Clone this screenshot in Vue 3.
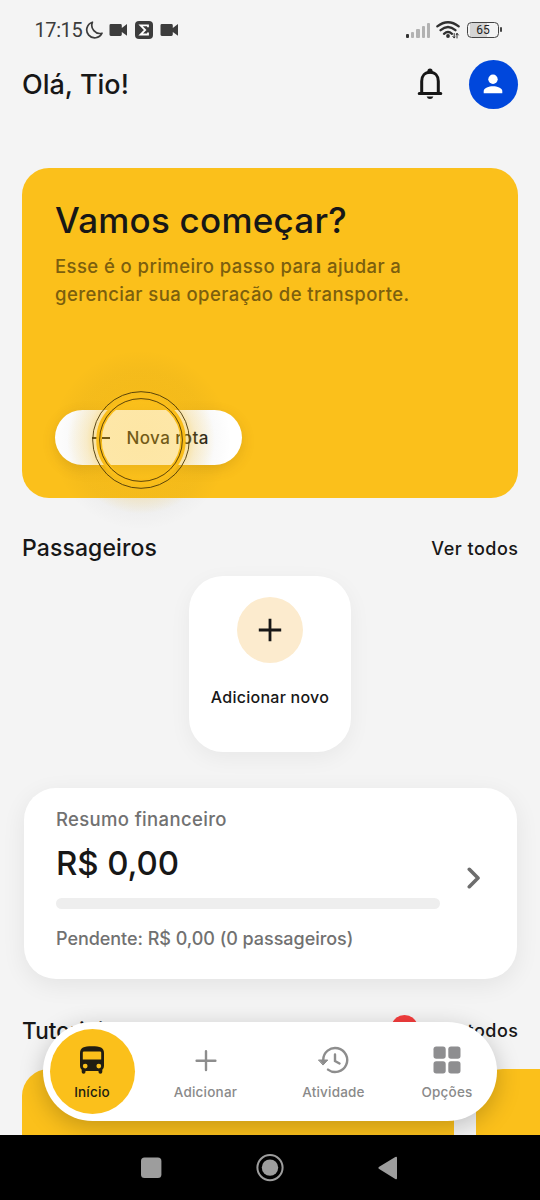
<script setup>
const signal = [4, 6, 9, 12, 15]
const tabs = [
  { id: 'home', label: 'Início', active: true },
  { id: 'add', label: 'Adicionar' },
  { id: 'history', label: 'Atividade' },
  { id: 'options', label: 'Opções' },
]
</script>

<template>
  <div class="phone">
    <div class="status">
      <span class="clock">17:15</span>
      <svg class="moon" width="18" height="18" viewBox="0 0 18 18"><path d="M7.4 1.2A8 8 0 1 0 17 12.2A8.2 8.2 0 0 1 7.4 1.2Z" /></svg>
      <svg class="cam" width="19" height="14" viewBox="0 0 19 14"><path d="M1.8 1H11.4Q12.8 1 12.8 2.4V5L18 1V12.8L12.8 9V11.6Q12.8 13 11.4 13H1.8Q.5 13 .5 11.6V2.4Q.5 1 1.8 1Z" /></svg>
      <svg class="sigma" width="18" height="18" viewBox="0 0 18 18"><rect width="18" height="18" rx="4" /><path d="M13 6.2V4.4H5.6L10.2 9L5.6 13.5H13V11.6" /></svg>
      <svg class="cam cam-last" width="19" height="14" viewBox="0 0 19 14"><path d="M1.8 1H11.4Q12.8 1 12.8 2.4V5L18 1V12.8L12.8 9V11.6Q12.8 13 11.4 13H1.8Q.5 13 .5 11.6V2.4Q.5 1 1.8 1Z" /></svg>
      <div class="signal">
        <i v-for="h in signal" :key="h" :style="{ height: h + 'px' }"></i>
      </div>
      <svg class="wifi" width="24" height="18" viewBox="0 0 24 18">
        <path d="M1.3 5.4Q12 -3 22.7 5.4M4.6 9.2Q12 2.8 19.4 9.2M8 12.8Q12 9.2 16 12.8" />
        <circle cx="12" cy="15" r="1.9" />
        <path class="arrows" d="M18.2 12.5V16.8M16.8 15.3L18.2 17L19 16M21 17V12.5M20.2 13.8L21 12.3L22.4 14" />
      </svg>
      <div class="battery"><span>65</span></div>
    </div>

    <header class="header">
      <h1>Olá, Tio!</h1>
      <svg class="bell" width="26" height="32" viewBox="0 0 26 32">
        <path d="M4.7 25V13.2C4.7 7.8 8 4.3 13 4.3S21.3 7.8 21.3 13.2V25M2.2 25.5H23.8" />
        <circle cx="13" cy="3" r="2.6" /><path class="solid" d="M9.6 28.4H16.4Q15.5 31 13 31T9.6 28.4Z" />
      </svg>
      <div class="avatar">
        <svg width="20" height="20" viewBox="0 0 20 20"><circle cx="10" cy="5.3" r="4.7" /><path d="M.7 19.2V17C.7 14 6 12.2 10 12.2S19.3 14 19.3 17V19.2Z" /></svg>
      </div>
    </header>

    <section class="hero">
      <h2>Vamos começar?</h2>
      <p>Esse é o primeiro passo para ajudar a<br />gerenciar sua operação de transporte.</p>
      <div class="route">
        <svg width="18" height="18" viewBox="0 0 18 18"><path d="M0 9H18M9 0V18" /></svg>
        <span>Nova rota</span>
        <div class="pulse">
          <svg width="180" height="180" viewBox="0 0 180 180">
            <defs>
              <radialGradient id="halo">
                <stop offset="0" stop-color="#fbc01b" stop-opacity=".4" />
                <stop offset=".52" stop-color="#fbc01b" stop-opacity=".38" />
                <stop offset=".62" stop-color="#fbc01b" stop-opacity=".2" />
                <stop offset=".84" stop-color="#fbc01b" stop-opacity="0" />
              </radialGradient>
              <radialGradient id="shade">
                <stop offset="0" stop-color="#000" stop-opacity="0" />
                <stop offset=".42" stop-color="#000" stop-opacity="0" />
                <stop offset=".53" stop-color="#442a00" stop-opacity=".045" />
                <stop offset=".75" stop-color="#222" stop-opacity=".03" />
                <stop offset="1" stop-color="#222" stop-opacity="0" />
              </radialGradient>
            </defs>
            <circle cx="90" cy="90" r="90" fill="url(#shade)" />
            <circle cx="90" cy="90" r="88" fill="url(#halo)" />
            <circle cx="90" cy="90" r="42" fill="none" stroke="#fabd19" stroke-width="5.5" />
            <circle cx="90" cy="90" r="48.3" fill="none" stroke="#493707" stroke-width=".9" />
            <circle cx="90" cy="90" r="41.4" fill="none" stroke="#493707" stroke-width=".9" />
          </svg>
        </div>
      </div>
    </section>

    <div class="row-title">
      <h3>Passageiros</h3><span class="all">Ver todos</span>
    </div>

    <div class="add-card">
      <div class="add-dot"><svg width="24" height="24" viewBox="0 0 24 24"><path d="M.8 12H23.2M12 .8V23.2" /></svg></div>
      <span>Adicionar novo</span>
    </div>

    <section class="finance">
      <div class="fin-main">
        <span class="fin-title">Resumo financeiro</span>
        <strong>R$ 0,00</strong>
        <div class="track"></div>
        <span class="pending">Pendente: R$ 0,00 (0 passageiros)</span>
      </div>
      <svg class="chevron" width="14" height="22" viewBox="0 0 14 22"><path d="M2.3 2.3L11 11L2.3 19.7" /></svg>
    </section>

    <div class="row-title tutorials">
      <h3>Tutoriais</h3><i class="dot"></i><span class="all">Ver todos</span>
    </div>
    <div class="videos"><div class="video"></div><div class="video"></div></div>

    <nav class="tabs">
      <div v-for="t in tabs" :key="t.id" class="tab" :class="[t.id, { active: t.active }]">
        <svg v-if="t.id === 'home'" width="26" height="28" viewBox="0 0 26 28"><path fill-rule="evenodd" d="M1 7C1 1.7 5 .3 13 .3S25 1.7 25 7V20Q25 22.4 23.3 23.8V26Q23.3 27.7 21.4 27.7T19.5 26V25H6.5V26Q6.5 27.7 4.6 27.7T2.7 26V23.8Q1 22.4 1 20ZM3.8 6.6V13.5H22.2V6.6Q22.2 5.6 21 5.6H5Q3.8 5.6 3.8 6.6ZM6.2 17.7A2.4 2.4 0 1 0 6.2 22.5A2.4 2.4 0 1 0 6.2 17.7ZM19.8 17.7A2.4 2.4 0 1 0 19.8 22.5A2.4 2.4 0 1 0 19.8 17.7Z" /></svg>
        <svg v-else-if="t.id === 'add'" width="22" height="28" viewBox="0 0 22 28"><path d="M1.6 14.7H20.4M11 5.3V24.1" /></svg>
        <svg v-else-if="t.id === 'history'" width="32" height="28" viewBox="0 0 32 28"><path d="M5.2 16V14A12 12 0 1 1 10 23.6M17 8.5V15L21.5 17.5" /><path class="tip" d="M.8 14H9.8L5.3 18.8Z" /></svg>
        <svg v-else width="28" height="28" viewBox="0 0 28 28"><rect x=".5" y=".5" width="12.2" height="12.2" rx="2.7" /><rect x="15.3" y=".5" width="12.2" height="12.2" rx="2.7" /><rect x=".5" y="15.3" width="12.2" height="12.2" rx="2.7" /><rect x="15.3" y="15.3" width="12.2" height="12.2" rx="2.7" /></svg>
        <span>{{ t.label }}</span>
      </div>
    </nav>

    <footer class="system">
      <svg width="22" height="22" viewBox="0 0 22 22"><rect x="1" y=".6" width="20.4" height="20.4" rx="3.5" /></svg>
      <svg width="28" height="28" viewBox="0 0 28 28"><circle cx="14" cy="13.6" r="12.6" fill="none" stroke="#9d9d9d" stroke-width="2" /><circle cx="14" cy="13.6" r="8.2" /></svg>
      <svg width="20" height="24" viewBox="0 0 20 24"><path d="M1.2 10.8L17.3 1Q19 .2 19 2V22Q19 24 17.3 22.9L1.2 13.1Q-.4 12 1.2 10.8Z" /></svg>
    </footer>
  </div>
</template>

<style>
body { margin: 0; background: #f4f4f4; }
</style>

<style scoped>
* { box-sizing: border-box; }
h1, h2, h3, p { margin: 0; font-weight: 500; }
svg { display: block; flex: none; }
.phone { position: relative; width: 540px; height: 1200px; overflow: hidden; background: #f4f4f4; color: #171717; font-family: "Inter", "Liberation Sans", sans-serif; font-weight: 500; white-space: nowrap; }
.status { height: 59px; display: flex; align-items: center; padding: 1px 41px 0 34.5px; color: #3c3c3c; }
.clock { width: 50px; font: 400 20px/24px Roboto, sans-serif; letter-spacing: -.4px; }
.moon path { fill: none; stroke: #3c3c3c; stroke-width: 1.7; stroke-linejoin: round; }
.cam { margin-left: 6.5px; fill: #3c3c3c; }
.sigma { margin-left: 6.5px; }
.sigma rect { fill: #3c3c3c; }
.sigma path { fill: none; stroke: #fff; stroke-width: 1.8; }
.cam-last { margin-left: 7px; }
.signal { margin-left: auto; display: flex; gap: 2px; align-items: flex-end; height: 15px; }
.signal i { width: 3.2px; border-radius: 1px; background: #b2b2b2; }
.signal i:first-child { background: #333; }
.wifi { margin-left: 6px; fill: #303030; }
.wifi path { fill: none; stroke: #303030; stroke-width: 2.3; stroke-linecap: round; }
.wifi .arrows { stroke-width: 1; }
.battery { position: relative; width: 32px; height: 16px; margin-left: 7px; border: 1.5px solid #444; border-radius: 4.5px; background: linear-gradient(90deg, transparent 2px, #d5d5d5 2px 19px, transparent 19px); text-align: center; font: 400 12px/14px Roboto, sans-serif; color: #222; }
.battery::after { content: ""; position: absolute; right: -4px; top: 4px; width: 2px; height: 5px; background: #444; border-radius: 1px; }
.header { display: flex; align-items: center; height: 50px; padding: 0 22px; }
h1 { font-size: 27px; line-height: 34px; letter-spacing: 0; padding-top: 2px; }
.bell { margin-left: auto; margin-right: 26px; fill: #171717; }
.bell path { fill: none; stroke: #171717; stroke-width: 3; stroke-linecap: round; }
.bell .solid { fill: #171717; stroke: none; }
.avatar { width: 49px; height: 49px; border-radius: 50%; background: #0047dc; display: grid; place-items: center; }
.avatar svg { fill: #fff; margin-left: -1px; }
.hero { margin: 59px 22px 0; height: 330px; border-radius: 27px; background: #fbc01b; padding: 30px 33px 33px; display: flex; flex-direction: column; align-items: flex-start; }
h2 { font-size: 35px; line-height: 44px; letter-spacing: .23px; }
.hero p { margin-top: 10px; font-size: 18.5px; line-height: 28px; letter-spacing: .42px; color: #7c5f0e; }
.route { position: relative; margin-top: auto; width: 187px; height: 55px; border-radius: 28px; background: #fff; box-shadow: 0 4px 14px rgba(100, 65, 0, .16); display: flex; align-items: center; padding-left: 37px; gap: 16.5px; font-size: 17px; letter-spacing: .4px; }
.route svg path { stroke: #171717; stroke-width: 1.8; }
.pulse { position: absolute; left: -4px; top: -60px; width: 180px; height: 180px; }
.row-title { display: flex; align-items: center; justify-content: space-between; height: 34px; margin: 33px 22px 0; }
h3 { font-size: 23px; line-height: 32px; letter-spacing: .1px; }
.all { font-size: 18px; letter-spacing: .5px; margin-right: -.5px; }
.add-card { width: 162px; height: 176px; margin: 11px auto 0; border-radius: 34px; background: #fff; box-shadow: 0 6px 22px rgba(0, 0, 0, .05); display: flex; flex-direction: column; align-items: center; padding-top: 21px; }
.add-dot { width: 66px; height: 66px; border-radius: 50%; background: #fcebce; display: grid; place-items: center; }
.add-dot path { stroke: #171717; stroke-width: 2.8; }
.add-card span { margin-top: 23px; font-size: 16px; line-height: 22px; letter-spacing: .25px; }
.finance { margin: 36px 23px 0 24px; height: 191px; border-radius: 32px; background: #fff; box-shadow: 0 6px 24px rgba(0, 0, 0, .07); display: flex; align-items: flex-start; justify-content: space-between; padding: 18px 36.5px 0 32px; }
.fin-main { width: 384px; display: flex; flex-direction: column; align-items: flex-start; color: #717171; }
.fin-title { font-size: 18.5px; line-height: 26px; letter-spacing: .35px; }
.fin-main strong { font-size: 33px; line-height: 42px; font-weight: 500; color: #171717; margin-top: 10px; letter-spacing: -.1px; }
.track { width: 100%; height: 11px; border-radius: 6px; background: #eee; margin-top: 14px; }
.pending { margin-top: 17px; font-size: 18px; line-height: 26px; letter-spacing: -.04px; }
.chevron { margin-top: 61px; }
.chevron path { fill: none; stroke: #6d6d6d; stroke-width: 3.6; stroke-linecap: round; stroke-linejoin: round; }
.tutorials { margin-top: 35px; }
.tutorials h3 { font-size: 22.5px; margin-top: -1px; }
.tutorials .all { margin-top: -1px; }
.dot { width: 27px; height: 27px; border-radius: 50%; background: #f43d3d; margin-left: auto; margin-right: 13px; margin-top: -5px; }
.videos { display: flex; gap: 22px; margin: 21px 0 0 22px; }
.video { flex: 0 0 432px; height: 160px; border-radius: 27px; background: #fbc01b; }
.tabs { position: absolute; left: 43px; top: 1022px; width: 454px; height: 99px; border-radius: 50px; background: #fff; box-shadow: 0 6px 24px rgba(0, 0, 0, .22); display: flex; align-items: center; padding-left: 6.5px; }
.tab { flex: none; display: flex; flex-direction: column; align-items: center; justify-content: center; height: 85px; gap: 9px; padding-top: 4px; color: #8a8a8a; font-size: 13.5px; line-height: 18px; letter-spacing: .2px; }
.tab path { stroke: #8d8d8d; stroke-width: 2.4; fill: none; stroke-linecap: round; }
.tab rect { fill: #8e8e90; }
.home { width: 85px; border-radius: 50%; background: #fbc01b; color: #211d12; }
.home path { stroke: none; fill: #211d12; }
.history .tip { fill: #8d8d8d; stroke-width: 1; }
.add { width: 142px; }
.history { width: 114px; }
.options { width: 113px; }
.system { position: absolute; left: 0; top: 1135px; width: 540px; height: 65px; background: #000; fill: #9d9d9d; display: flex; align-items: center; justify-content: center; gap: 94px; padding-right: 2px; }
</style>
